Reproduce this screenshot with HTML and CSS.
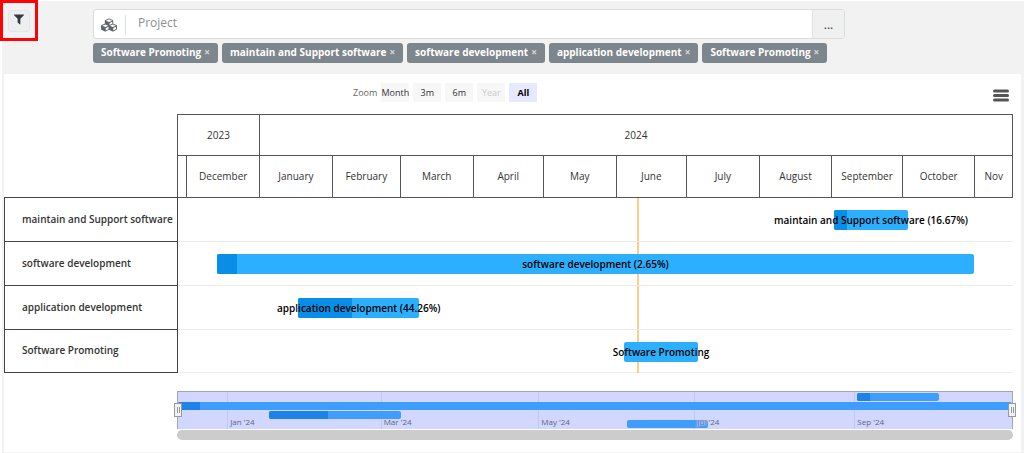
FILE: index.html
```html
<!DOCTYPE html>
<html lang="en">
<head>
<meta charset="utf-8">
<title>Project timeline</title>
<link rel="stylesheet" href="styles.css">
</head>
<body>
<div class="page">
  <header class="toolbar">
    <div class="filter-frame">
      <button class="filter-button" type="button" aria-label="Filter">
        <svg class="filter-icon" viewBox="192 256 1408 1408" aria-hidden="true"><path d="M1595 295q17 41-14 70l-493 493v742q0 42-39 59-13 5-25 5-27 0-45-19l-256-256q-19-19-19-45v-486l-493-493q-31-29-14-70 17-39 59-39h1280q42 0 59 39z"/></svg>
      </button>
    </div>
    <div class="filters">
      <div class="project-field">
        <label class="field-icon" for="project" aria-label="Project">
          <svg class="cubes-icon" viewBox="0 0 2304 1792" aria-hidden="true"><path d="M640 1632l384-192v-314l-384 164v342zm-64-454l404-173-404-173-404 173zm1088 454l384-192v-314l-384 164v342zm-64-454l404-173-404-173-404 173zm-448-293l384-165v-266l-384 164v267zm-64-379l441-189-441-189-441 189zm1088 518v416q0 36-19 67t-52 47l-448 224q-25 14-57 14t-57-14l-448-224q-4-2-7-4-2 2-7 4l-448 224q-25 14-57 14t-57-14l-448-224q-33-16-52-47t-19-67v-416q0-38 21.500-70t56.500-48l434-186v-400q0-38 21.500-70t56.500-48l448-192q23-10 50-10t50 10l448 192q35 16 56.500 48t21.500 70v400l434 186q36 16 57 48t21 70z"/></svg>
        </label>
        <input class="project-input" id="project" type="text" placeholder="Project">
        <button class="browse-button" type="button" aria-label="Browse projects">...</button>
      </div>
      <div class="tags">
        <span class="tag">Software Promoting<button class="tag-remove" type="button">×</button></span>
        <span class="tag">maintain and Support software<button class="tag-remove" type="button">×</button></span>
        <span class="tag">software development<button class="tag-remove" type="button">×</button></span>
        <span class="tag">application development<button class="tag-remove" type="button">×</button></span>
        <span class="tag">Software Promoting<button class="tag-remove" type="button">×</button></span>
      </div>
    </div>
  </header>

  <main class="panel">
    <div class="chart-tools">
      <div class="ranges">
        <span class="ranges-label">Zoom</span>
        <button class="range" type="button">Month</button>
        <button class="range" type="button">3m</button>
        <button class="range" type="button">6m</button>
        <button class="range" type="button" disabled>Year</button>
        <button class="range range-active" type="button">All</button>
      </div>
      <button class="menu-button" type="button" aria-label="Chart menu">
        <svg class="menu-icon" viewBox="0 0 16 13" aria-hidden="true"><path d="M1.500 2h13M1.500 6.500h13M1.500 11h13"/></svg>
      </button>
    </div>

    <div class="gantt">
      <div class="axis">
        <div class="years">
          <div class="cell">2023</div><div class="cell">2024</div>
        </div>
        <div class="months">
          <div class="cell"></div><div class="cell">December</div><div class="cell">January</div><div class="cell">February</div><div class="cell">March</div><div class="cell">April</div><div class="cell">May</div><div class="cell">June</div><div class="cell">July</div><div class="cell">August</div><div class="cell">September</div><div class="cell">October</div><div class="cell">Nov</div>
        </div>
      </div>
      <div class="rows">
        <div class="row">
          <div class="row-name">maintain and Support software</div>
          <div class="track">
            <div class="bar" style="left:78.6%;width:8.8%"><span class="done" style="width:16.67%"></span><span class="bar-label">maintain and Support software (16.67%)</span></div>
          </div>
        </div>
        <div class="row">
          <div class="row-name">software development</div>
          <div class="track">
            <div class="bar" style="left:4.7%;width:90.6%"><span class="done" style="width:2.65%"></span><span class="bar-label">software development (2.65%)</span></div>
          </div>
        </div>
        <div class="row">
          <div class="row-name">application development</div>
          <div class="track">
            <div class="bar" style="left:14.4%;width:14.5%"><span class="done" style="width:44.26%"></span><span class="bar-label">application development (44.26%)</span></div>
          </div>
        </div>
        <div class="row">
          <div class="row-name">Software Promoting</div>
          <div class="track">
            <div class="bar" style="left:53.4%;width:8.9%"><span class="bar-label">Software Promoting</span></div>
          </div>
        </div>
      </div>
    </div>

    <div class="navigator">
      <div class="overview">
        <span class="tick" style="left:5.9%"></span>
        <span class="tick" style="left:24.3%"></span>
        <span class="tick" style="left:43.2%"></span>
        <span class="tick" style="left:61.9%"></span>
        <span class="tick" style="left:81.1%"></span>
        <div class="lane"><div class="mini" style="left:81.4%;width:9.8%"><span class="mini-done" style="width:16.67%"></span></div></div>
        <div class="lane"><div class="mini" style="left:0%;width:100%"><span class="mini-done" style="width:2.65%"></span></div></div>
        <div class="lane"><div class="mini" style="left:10.9%;width:15.9%"><span class="mini-done" style="width:44.26%"></span></div></div>
        <div class="lane"><div class="mini" style="left:53.8%;width:9.7%"></div></div>
        <span class="date" style="left:5.9%">Jan '24</span>
        <span class="date" style="left:24.3%">Mar '24</span>
        <span class="date" style="left:43.2%">May '24</span>
        <span class="date" style="left:61.9%">Jul '24</span>
        <span class="date" style="left:81.1%">Sep '24</span>
        <span class="handle handle-start"></span>
        <span class="handle handle-end"></span>
      </div>
      <div class="scrollbar"></div>
    </div>
  </main>
</div>
</body>
</html>
```

FILE: styles.css
```css
* {
  box-sizing: border-box;
}

body {
  margin: 0;
  background: #fff;
  color: #333;
  font-family: "Open Sans", "Noto Sans", sans-serif;
  font-size: 10px;
}

button,
input {
  margin: 0;
  padding: 0;
  border: 0;
  font: inherit;
  color: inherit;
}

.page {
  margin: 1px 0 0 2px;
  padding: 0 3px 2px 2px;
  background: #f2f2f2;
}

/* Filter toolbar */

.toolbar {
  display: flex;
  align-items: flex-start;
  min-height: 73px;
  margin-left: -4px;
}

.filter-frame {
  flex: none;
  display: flex;
  align-items: center;
  justify-content: center;
  width: 38px;
  height: 41px;
  margin-top: -1px;
  border: 3px solid #fb0307;
}

.filter-button {
  display: flex;
  align-items: flex-start;
  justify-content: center;
  width: 22px;
  height: 22px;
  padding-top: 3px;
  border: 1px solid #e4e6e8;
  border-radius: 3px;
  background: #eceeef;
}

.filter-icon {
  width: 10px;
  height: 11px;
  fill: #343a40;
}

.filters {
  flex: 1;
  max-width: 807px;
  padding: 8px 0 0 55px;
}

.project-field {
  display: flex;
  height: 30px;
  border: 1px solid #d9dbdc;
  border-radius: 3px;
  background: #fff;
}

.field-icon {
  display: flex;
  align-items: center;
  justify-content: center;
  width: 32px;
  margin: 5px 0 3px;
  border-right: 1px solid #dee0e2;
}

.cubes-icon {
  width: 17px;
  height: 14px;
  fill: #5f666c;
}

.project-input {
  flex: 1;
  min-width: 0;
  padding: 0 12px 3px;
  background: transparent;
  font-size: 12px;
}

.project-input::placeholder {
  color: #8e8e8e;
}

.browse-button {
  width: 32px;
  border-left: 1px solid #e0e2e3;
  background: #f0f0f0;
  font-size: 12px;
}

.tags {
  display: flex;
  flex-wrap: wrap;
  gap: 4px;
  margin-top: 4px;
}

.tag {
  display: flex;
  align-items: center;
  gap: 3px;
  height: 20px;
  padding: 0 8px 2px;
  border-radius: 3px;
  background: #7d868d;
  color: #fff;
  font-weight: 700;
}

.tag-remove {
  background: none;
  color: #d5d9dc;
}

/* Chart */

.panel {
  padding: 9px 8px 12px 0;
  background: #fff;
}

.chart-tools {
  display: flex;
  justify-content: space-between;
  padding: 0 4px 0 349px;
}

.ranges {
  display: flex;
  align-items: center;
  gap: 4px;
  font-size: 9px;
}

.ranges-label {
  color: #666;
}

.range {
  display: flex;
  align-items: center;
  justify-content: center;
  width: 28px;
  height: 19px;
  background: #f7f7f7;
  color: #333;
}

.range:disabled {
  color: #ccc;
}

.range-active {
  background: #e6e9ff;
  color: #000;
  font-weight: 700;
}

.menu-button {
  display: flex;
  align-items: flex-end;
  background: none;
}

.menu-icon {
  width: 16px;
  height: 13px;
  fill: none;
  stroke: #555;
  stroke-width: 3;
  stroke-linecap: round;
}

.gantt {
  margin-top: 12px;
}

.axis {
  margin-left: 173px;
  border: 1px solid #555;
  border-width: 1px 0 0 1px;
}

.years,
.months {
  display: grid;
  height: 42px;
}

.years {
  grid-template-columns: minmax(0, 35fr) minmax(0, 321fr);
  height: 41px;
}

.months {
  grid-template-columns:
    minmax(0, 4fr) minmax(0, 31fr) minmax(0, 31fr) minmax(0, 29fr)
    minmax(0, 31fr) minmax(0, 30fr) minmax(0, 31fr) minmax(0, 30fr)
    minmax(0, 31fr) minmax(0, 31fr) minmax(0, 30fr) minmax(0, 31fr)
    minmax(0, 16fr);
}

.cell {
  display: flex;
  align-items: center;
  justify-content: center;
  padding-bottom: 1px;
  border: 1px solid #555;
  border-width: 0 1px 1px 0;
}

.rows {
  margin-top: -1px;
}

.row {
  display: flex;
  height: 44px;
}

.row-name {
  flex: none;
  display: flex;
  align-items: center;
  width: 174px;
  padding: 0 0 2px 17px;
  border: 1px solid #444;
  border-bottom: 0;
  font-weight: 600;
  white-space: nowrap;
}

.row:last-child .row-name {
  border-bottom: 1px solid #444;
}

.track {
  flex: 1;
  position: relative;
  border-top: 1px solid #ececec;
}

.row:first-child .track {
  border-top-color: #555;
}

.row:last-child .track {
  border-bottom: 1px solid #ececec;
}

/* Marker for the current date, behind the bars */
.track::before {
  content: "";
  position: absolute;
  top: 0;
  bottom: -1px;
  left: 55%;
  width: 2px;
  background: #fbcf85;
}

.bar {
  position: absolute;
  top: 12px;
  display: flex;
  align-items: center;
  justify-content: center;
  height: 20px;
  border-radius: 2px;
  background: #2caffe;
  color: #000;
}

.done,
.mini-done {
  position: absolute;
  top: 0;
  bottom: 0;
  left: 0;
  border-radius: 2px 0 0 2px;
  background: #0a8de6;
}

.bar-label {
  position: relative;
  flex: none;
  font-weight: 600;
  white-space: nowrap;
}

/* Overview strip */

.navigator {
  margin: 18px 0 0 173px;
}

.overview {
  position: relative;
  padding-top: 1px;
  border: 1px solid #a3a6b8;
  border-bottom: 0;
  background: #d1d7ff;
}

.lane {
  position: relative;
  height: 9px;
}

.mini {
  position: absolute;
  top: 0;
  height: 8px;
  border-radius: 2px;
  background: #3f9dfd;
}

.mini-done {
  background: #1d83e8;
}

.tick {
  position: absolute;
  top: 0;
  bottom: 0;
  width: 1px;
  background: #c3c8ec;
}

.date {
  position: absolute;
  bottom: 2px;
  padding-left: 3px;
  color: #5f6484;
  font-size: 8px;
  line-height: 11px;
  text-shadow: 0 0 1px #d1d7ff, 0 0 1px #d1d7ff, 0 0 2px #d1d7ff, 0 0 2px #d1d7ff;
}

.handle {
  position: absolute;
  top: 11px;
  width: 8px;
  height: 14px;
  border: 1px solid #999;
  background: linear-gradient(#999, #999) 2px 3px / 1px 6px no-repeat,
    linear-gradient(#999, #999) 4px 3px / 1px 6px no-repeat, #f2f2f2;
}

.handle-start {
  left: -4px;
}

.handle-end {
  right: -4px;
}

.scrollbar {
  height: 10px;
  margin-top: 1px;
  border-radius: 5px;
  background: #ccc;
}
```
